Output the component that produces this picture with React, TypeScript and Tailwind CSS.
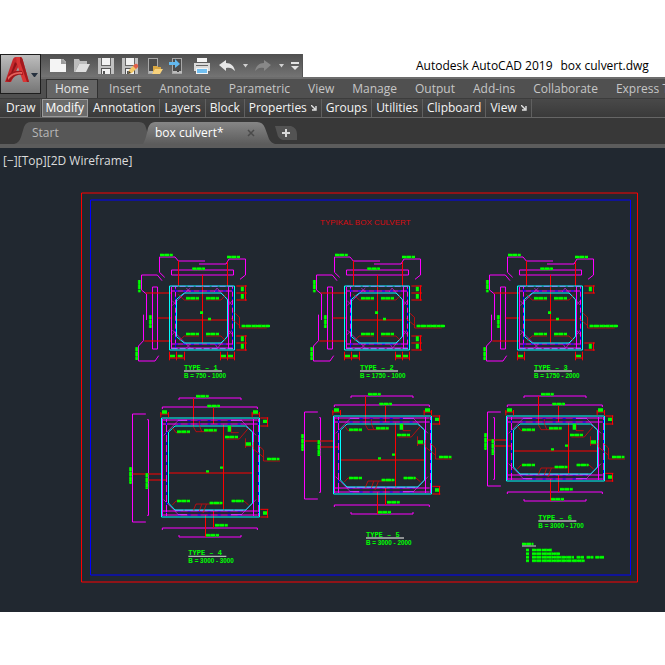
import { useState } from "react";

const ribbonTabs = ["Home", "Insert", "Annotate", "Parametric", "View", "Manage", "Output", "Add-ins", "Collaborate", "Express Tools"];

const panels = [
    { name: "Draw" },
    { name: "Modify" },
    { name: "Annotation" },
    { name: "Layers" },
    { name: "Block" },
    { name: "Properties", launcher: true },
    { name: "Groups" },
    { name: "Utilities" },
    { name: "Clipboard" },
    { name: "View", launcher: true },
];

const MAGENTA = "#ff00ff";
const RED = "#ff0000";
const CYAN = "#00ffff";
const GREEN = "#00ff00";
const BLUE = "#0000ff";

/* ---------- Quick access toolbar ---------- */

function NewIcon() {
    return (
        <svg width="18" height="18" viewBox="0 0 18 18">
            <path d="M1 2h11l5 5v8H1z" fill="#f4f4f4" />
            <path d="M12 2v5h5z" fill="#9a9a9a" />
            <path d="M13 2h1l3 3v1z" fill="#f4f4f4" />
        </svg>
    );
}

function OpenIcon() {
    return (
        <svg width="18" height="18" viewBox="0 0 18 18">
            <path d="M1 15V2h5l1 2h7v3H6L2 15z" fill="#bcbcbc" />
            <path d="M6 7h11l-4 8H2z" fill="#dedede" />
        </svg>
    );
}

function SaveIcon({ pencil }: { pencil?: boolean }) {
    return (
        <svg width="18" height="18" viewBox="0 0 18 18">
            <path d="M1 1h16v16H1z" fill="#c2c2c2" />
            <path d="M4 1h10v8H4z" fill="#666" />
            <path d="M5 1h8v7H5z" fill="#f2f2f2" />
            <path d="M4 11h10v6H4z" fill="#555" />
            <path d="M5 12h8v5H5z" fill="#f2f2f2" />
            <path d="M6 14h2v3H6z" fill="#555" />
            {pencil && (
                <>
                    <path d="M7 17l1-4 6-6 3 3-6 6z" fill="#f3c766" />
                    <path d="M12 9l2-2q2-1 3 1t-1 3l-1 1z" fill="#e0604c" />
                    <path d="M7 17l1-3 2 2z" fill="#3b3b3b" />
                </>
            )}
        </svg>
    );
}

function DeviceIcon({ kind }: { kind: "open" | "save" }) {
    return (
        <svg width="18" height="18" viewBox="0 0 18 18">
            <rect x="3.5" y="1.5" width="9" height="15" fill="#4c4c4c" stroke="#a8a8a8" />
            <path d="M4 14h9v2H4z" fill="#bcbcbc" />
            <path d="M8 14h2v1H8z" fill="#444" />
            {kind === "open" ? (
                <>
                    <path d="M8 16V9h4l1 1h3v2z" fill="#d9a640" />
                    <path d="M10 12h8l-3 5H7z" fill="#f8d27c" />
                </>
            ) : (
                <path d="M0 5h6V2l5 5-5 4V8H0z" fill="#63b8ee" />
            )}
        </svg>
    );
}

function PrintIcon() {
    return (
        <svg width="18" height="18" viewBox="0 0 18 18">
            <path d="M4 1h10v4H4z" fill="#f3f3f3" />
            <path d="M1 6h16v8H1z" fill="#dadada" />
            <path d="M3 8h12v1H3z" fill="#666" />
            <path d="M3 11h12v6H3z" fill="#f3f3f3" />
            <path d="M4 12h10v4H4z" fill="#71bff0" />
        </svg>
    );
}

function ArrowIcon({ redo }: { redo?: boolean }) {
    return (
        <svg width="16" height="16" viewBox="0 0 16 16">
            {redo ? (
                <path d="M16 7l-7-5v3C4 5 1 8 0 13c3-3 5-4 9-3v3z" fill="#888" />
            ) : (
                <path d="M0 7l7-5v3c5 0 8 3 9 8-3-3-5-4-9-3v3z" fill="#e6e6e6" />
            )}
        </svg>
    );
}

function Caret({ bar }: { bar?: boolean }) {
    return (
        <svg width="8" height="16" viewBox="0 0 8 16">
            {bar ? (
                <path d="M0 4h8v2H0zM0 8h8l-4 4z" fill="#e4e4e4" />
            ) : (
                <path d="M2 6h5L4.500 9.500z" fill="#d0d0d0" />
            )}
        </svg>
    );
}

function QuickAccess() {
    return (
        <div className="flex h-[23px] w-[303px] items-center border-r border-[#555] bg-gradient-to-b from-[#4f4f4f] to-[#747474] pl-[49px]">
            <div className="flex items-center gap-1.5">
                <button aria-label="New"><NewIcon /></button>
                <button aria-label="Open"><OpenIcon /></button>
                <button aria-label="Save"><SaveIcon /></button>
                <button aria-label="Save as"><SaveIcon pencil /></button>
                <button aria-label="Open from mobile"><DeviceIcon kind="open" /></button>
                <button aria-label="Save to mobile"><DeviceIcon kind="save" /></button>
                <button aria-label="Plot"><PrintIcon /></button>
            </div>
            <div className="ml-2 flex items-center gap-1.5">
                <button aria-label="Undo"><ArrowIcon /></button>
                <button aria-label="Undo list"><Caret /></button>
                <button aria-label="Redo"><ArrowIcon redo /></button>
                <button aria-label="Redo list"><Caret /></button>
                <button aria-label="Customize"><Caret bar /></button>
            </div>
        </div>
    );
}

function AppButton() {
    return (
        <button aria-label="Application menu" className="absolute left-0 top-0 z-10 h-10 w-[41px] border border-[#1d1d1d] bg-gradient-to-b from-[#bdbdbd] to-[#767676]">
            <svg className="block" width="39" height="38" viewBox="0 0 39 38">
                <path d="M4 27L12 4Q13 2 15 2H19L20 6 11 25 10 27z" fill="#c5272b" />
                <path d="M15 2H19Q21 2 21.500 4L28 27H22L16 9z" fill="#d93535" />
                <path d="M19 2Q21 2 21.500 4L28 27H26L19 7z" fill="#a3191d" />
                <path d="M5 26L8 19C12 16 16 15 21 16L22 20C16 19 13 21 9 27z" fill="#9c181c" />
                <path d="M7 22C11 18 15 17 21 17V19C15 18 11 20 7 25z" fill="#e6605a" />
                <path d="M14 7l2 2-4 8-2 1z" fill="#8d1418" />
                <path d="M30 18h7l-3 4h-1z" fill="#26313f" />
            </svg>
        </button>
    );
}

/* ---------- Ribbon ---------- */

function Ribbon() {
    const [tab, setTab] = useState("Home");
    return (
        <nav>
            <div className="flex h-[21px] overflow-hidden border-t-2 border-[#6c6c6c] bg-[#505050] pl-[46px]">
                {ribbonTabs.map((name) => (
                    <button
                        key={name}
                        onClick={() => setTab(name)}
                        className={
                            name === tab
                                ? "mr-[2px] shrink-0 border border-b-0 border-[#303030] bg-[#656565] px-2 text-[12px] leading-[18px] text-[#e6e6e6]"
                                : "shrink-0 px-[9px] text-[12px] leading-[20px] text-[#c6c6c6]"
                        }
                    >
                        {name}
                    </button>
                ))}
            </div>
            <div className="flex h-5 border-y border-t-[#3c3c3c] border-b-[#666] bg-gradient-to-b from-[#494949] to-[#3a3a3a] pl-[2px]">
                {panels.map((p) => (
                    <button
                        key={p.name + (p.launcher ? "-l" : "")}
                        className={
                            p.name === "Modify"
                                ? "mx-[1px] flex shrink-0 items-center border border-[#9a9a9a] bg-[#6b6b6b] px-[3px] text-[12px] leading-[16px] text-white"
                                : "flex shrink-0 items-center gap-1 border-r border-[#606060] px-1 text-[12px] leading-[18px] text-[#f4f4f4]"
                        }
                    >
                        {p.name}
                        {p.launcher && (
                            <svg width="6" height="6" viewBox="0 0 6 6">
                                <path d="M0 0l4 4M5 1v4H1" stroke="#e0e0e0" strokeWidth="1.4" fill="none" />
                            </svg>
                        )}
                    </button>
                ))}
            </div>
        </nav>
    );
}

function FileTabs() {
    return (
        <div className="flex h-[30px] border-b-4 border-[#5c5c5c] bg-[#383838] pl-[14px] pt-[4px] text-[12px] leading-[22px]">
            <button className="relative -mr-2 h-[22px] w-[137px] pl-[18px] text-left text-[#b8b8b8]">
                <svg className="absolute inset-0" width="137" height="22" viewBox="0 0 137 22">
                    <path d="M0 22Q5 21 7 15L10 5Q12 0 17 0H125Q131 0 132 6L137 22z" fill="#575757" />
                </svg>
                <span className="relative">Start</span>
            </button>
            <button className="relative h-[22px] w-[132px] pl-[12px] text-left text-white">
                <svg className="absolute inset-0" width="132" height="22" viewBox="0 0 132 22">
                    <defs>
                        <linearGradient id="tab" x1="0" y1="0" x2="0" y2="1">
                            <stop offset="0" stopColor="#868686" />
                            <stop offset="1" stopColor="#5c5c5c" />
                        </linearGradient>
                    </defs>
                    <path d="M0 22Q3 17 5 6Q7 0 12 0H114Q120 0 122 6L126 17Q128 21 132 22z" fill="url(#tab)" />
                    <path d="M105 8l6 6M111 8l-6 6" stroke="#4a4a4a" strokeWidth="1.500" />
                </svg>
                <span className="relative">box culvert*</span>
            </button>
            <button aria-label="New drawing" className="h-[22px]">
                <svg width="22" height="22" viewBox="0 0 22 22">
                    <path d="M0 4H16Q22 6 22 12V18H8Q3 17 2 11z" fill="#535353" />
                    <path d="M11 7v8M7 11h8" stroke="#d8d8d8" strokeWidth="2" />
                </svg>
            </button>
        </div>
    );
}

/* ---------- Drawing, three drawing units to a pixel ---------- */

type StrokeProps = { d: string; c: string; w?: number; dash?: string };

function Stroke({ d, c, w = 3, dash }: StrokeProps) {
    return <path d={d} stroke={c} strokeWidth={w} strokeDasharray={dash} fill="none" />;
}

// Bar marks plotted too small to read
function Marks({ d }: { d: string }) {
    return (
        <>
            <Stroke d={d} c="#00b400" w={9} dash="11 2 14 2 6 1" />
            <Stroke d={d} c={GREEN} w={6} dash="12 1 15 2" />
        </>
    );
}

type TitleProps = { x: number; y: number; n: number; size: string };

function Title({ x, y, n, size }: TitleProps) {
    return (
        <g fill={GREEN}>
            <text x={x} y={y} fontSize="21" fontWeight="bold" fontFamily="'Liberation Mono', monospace" xmlSpace="preserve">{`TYPE – ${n}`}</text>
            <text x={x} y={y + 23} fontSize="19" fontWeight="bold" fontFamily="'Liberation Sans', sans-serif">{size}</text>
            <path d={`M${x} ${y + 3}h114`} stroke="#d8d8d8" strokeWidth="4" opacity="0.8" />
        </g>
    );
}

type SmallProps = { x: number; n: number; size: string; titleX: number; single?: boolean };

function SmallCulvert({ x, n, size, titleX, single }: SmallProps) {
    return (
        <g transform={`translate(${x} 240) scale(${1 / 3})`}>
            {/* bent bars and bar shapes outside the section */}
            <Stroke c={MAGENTA} d="M119 112L103.500 97V51H150L160 63H240M345 118L361.500 105V57H312L303 72H222M139.500 90H325.500V105H139.500zM111 122L97 105H49.500V150L64.500 162V240M101 347L90 363H40.500V318L55.500 302V224M82.500 141H97.500V327H82.500z" />
            <Stroke c={RED} d="M160.500 62V138M307.500 65V138M232.500 104V309M154 240H308M62 159H138M98 234H138M58 303H138" />

            {/* haunches */}
            <Stroke c="#a020b0" d="M142 196L196 144M184 144L196 156M268 156L276 144L322 196M142 270L196 324M184 324L196 312M270 312L278 324L322 270M142 182L154 196M142 284L154 270M322 182L310 196M322 284L310 270" />

            {/* concrete outline and reinforcement */}
            <Stroke c={CYAN} d="M133.500 138H328.500V330H133.500z" />
            <Stroke c={MAGENTA} d="M139.500 141V327M151.500 141V327M310.500 141V327M322.500 141V327M138 153H324M138 312H324M138 324H324" />
            <Stroke c="#8090ff" d="M140 139H324M140 326H324" dash="18 6" />
            <Stroke c={BLUE} d="M151.500 146V324M322.500 146V324M150 153H318M150 312H318" dash="9 15" />
            <Stroke c={CYAN} d="M154.500 178L178 159H288L307.500 178V290L288 309H178L154.500 290z" />

            {/* leaders */}
            <Stroke c={RED} w={2} d="M160 163L178 180H222M303 163L288 180H243M162 302L178 288H222M301 302L288 288H243M328 218L343.500 232V264H425M318 235L343 256" />
            <Stroke c={RED} d="M133.500 335V361M154.500 335V361M307.500 335V361M328.500 335V361M133 354H155M307 354H329" />
            <Stroke c={RED} d="M334 138H366M334 159H366M334 309H366M334 330H366M361.500 136V160M361.500 307V332" />
            {!single && <Stroke c={RED} d="M178.500 335V361M286.500 335V361M154 354H179M286 354H308M334 180H366M334 288H366M361.500 158V182M361.500 286V308" />}

            {/* bar marks */}
            <Marks d="M105 45H143M306 51H345M202 86H240M183 175H222M243 175H282M183 282H222M243 282H282M350 258H435M43 120V157M76 226V264M35 322V360" />
            <Stroke c={GREEN} w={8} d="M225 218H234M249 237H258M135 348H150M309 348H324" />
            <Stroke c={GREEN} w={9} d="M352 140V154M352 311V326" />
            {!single && (
                <>
                    <Stroke c={GREEN} w={8} d="M158 348H173M288 348H303" />
                    <Stroke c={GREEN} w={9} d="M352 162V176M352 289V304" />
                </>
            )}
            <Title x={titleX} y={390} n={n} size={size} />
        </g>
    );
}

type LargeProps = {
    x: number;
    y: number;
    h: number;
    n: number;
    size: string;
    mid: number;
    titleY: number;
    titleX: number;
    // hoop bars at the left: position, bottom and level of the leaders
    bars: { x1: number; x2: number; bottom: number; lead: number };
};

function LargeCulvert({ x, y, h, n, size, mid, titleY, titleX, bars }: LargeProps) {
    const { x1, x2, bottom, lead } = bars;
    const wallEnd = h - 42;
    return (
        <g transform={`translate(${x} ${y}) scale(${1 / 3})`}>
            {/* bars above and below */}
            <Stroke c={MAGENTA} d={`M54 -54V-60H240V-54M4 -27V-33H289V-27M4 ${h + 39}V${h + 33}H289V${h + 39}M54 ${h + 54}V${h + 60}H240V${h + 54}`} />
            <Stroke c={MAGENTA} d={`M${x1 + 40} -12H${x1}V${bottom}H${x1 + 40}M${x2 - 4} 5H${x2}V${bottom - 20}H${x2 - 4}`} />
            <Stroke c={RED} d={`M${x1} ${lead}H2M${x2} ${lead + 18}H17M97.500 -60V26M157.500 -31V18M133.500 ${h - 6}V${h + 60}M157.500 ${h - 18}V${h + 33}M187.500 20V${h - 22}M22 ${mid}H275`} />

            {/* haunches */}
            <Stroke c="#a020b0" d={`M8 52L50 9M285 52L243 9M8 ${h - 52}L50 ${h - 9}M285 ${h - 52}L243 ${h - 9}`} />

            <Stroke c={CYAN} d={`M1.500 0H295.500V${h}H1.500z`} />
            <Stroke c={MAGENTA} d={`M4.500 3V${h - 3}M16.500 3V${h - 3}M277.500 3V${h - 3}M292.500 3V${h - 3}M6 6H290M6 18H290M6 ${h - 18}H290M6 ${h - 6}H290`} />
            <Stroke c={BLUE} d={`M16.500 12V${h - 12}M292.500 12V${h - 12}M50 8H245M50 18H245M50 ${h - 18}H245M50 ${h - 6}H245`} dash="9 21" />
            <Stroke c="#d040ff" d={`M50 7H78M210 7H243M50 ${h - 7}H78M210 ${h - 7}H243`} />
            <Stroke c={CYAN} d={`M22.500 ${wallEnd}V42L42 24H254L274.500 42V${wallEnd}L254 ${h - 21}H42z`} />
            <Stroke c="#8090ff" d={`M42 ${h - 20}H254`} dash="24 6" />

            {/* leaders */}
            <Stroke c={RED} w={2} d="M34 29L45 44H87M97 26L105 41H166M115 8V22L122 40M262 31L235 63H196M210.500 23V44H233M253.500 61V90M253 84H275M277 72V93L307 117M293 83L307.500 96V129H357" />
            <Stroke c={RED} w={2} d={`M34 ${h - 36}L45 ${h - 48}H87M263 ${h - 36}L249 ${h - 48}H212M97 ${h - 20}L105 ${h - 39}H182M115 ${h - 18}L122 ${h - 38}M126 ${h - 12}L136 ${h - 38}`} />
            <Stroke c={RED} d={`M-2 -12H22M-.500 -18V-2M22.500 -18V-2M272 -12H296M273.500 -18V-2M295.500 -18V-2M298 0H322M298 24H322M319.500 -2V26M298 ${h - 23}H322M298 ${h}H322M319.500 ${h - 24}V${h + 2}`} />

            {/* bar marks */}
            <Marks d={`M105 -65H143M139 -36H177M48 41H87M129 37H167M192 57H231M318 123H355M48 ${h - 48}H87M212 ${h - 48}H248M146 ${h - 42}H184M162 ${h + 25}H200M135 ${h + 55}H174M${x1 - 6} ${lead - 20}V${lead + 30}M${x2 - 5} ${lead - 2}V${lead + 45}`} />
            <Stroke c={GREEN} w={10} d={`M3 -18H18M276 -18H291M205 23V41M254 78H270M306 10H318M306 ${h - 12}H318`} />
            <Stroke c={GREEN} w={7} d={`M135 ${mid - 5}H144M177 ${mid - 16}H186`} />
            <Title x={titleX} y={titleY} n={n} size={size} />
        </g>
    );
}

function Drawing() {
    return (
        <svg className="block w-full" viewBox="0 172 665 440" role="img" aria-label="Box culvert drawing">
            <path d="M81.500 193H637.500V582H81.500z" fill="none" stroke={RED} />
            <path d="M90.500 200H630.500V575H90.500z" fill="none" stroke={BLUE} />
            <text x="320" y="225" fontSize="8" fill="#d80c10" fontFamily="'Liberation Sans', sans-serif">TYPIKAL BOX CULVERT</text>

            <SmallCulvert x={125} n={1} size="B = 750 - 1000" titleX={177} />
            <SmallCulvert x={300} n={2} size="B = 1750 - 1000" titleX={180} />
            <SmallCulvert x={473} n={3} size="B = 1750 - 2000" titleX={183} single />

            <LargeCulvert x={161} y={418} h={297} n={4} size="B = 3000 - 3000" mid={165} titleX={82} titleY={412} bars={{ x1: -85.5, x2: -37.5, bottom: 312, lead: 168 }} />
            <LargeCulvert x={333} y={416} h={234} n={5} size="B = 3000 - 2000" mid={132} titleX={99} titleY={363} bars={{ x1: -85.5, x2: -37.5, bottom: 249, lead: 75 }} />
            <LargeCulvert x={506} y={416} h={195} n={6} size="B = 3000 - 1700" mid={105} titleX={97} titleY={312} bars={{ x1: -55.5, x2: -34.5, bottom: 210, lead: 72 }} />

            {/* general notes */}
            <g transform={`translate(470 385) scale(${1 / 3})`}>
                <Marks d="M156 477H190M186 495H246M186 506H270M186 517H312M320 517H342M350 517H370M376 517H402M186 527H344M168 495H177M168 506H177M168 517H177M168 527H177" />
                <path d="M156 483H198" stroke="#c8c8c8" strokeWidth="4" opacity="0.8" />
            </g>
        </svg>
    );
}

export default function App() {
    return (
        <div className="min-h-screen bg-white py-[54px] font-['Open_Sans',sans-serif]">
            <header className="relative">
                <AppButton />
                <div className="flex">
                    <QuickAccess />
                    <div className="flex flex-1 gap-2 whitespace-nowrap pl-[113px] text-[12px] leading-[23px] text-black">
                        <span>Autodesk AutoCAD 2019</span>
                        <span>box culvert.dwg</span>
                    </div>
                </div>
                <Ribbon />
                <FileTabs />
            </header>
            <main className="bg-[#212830]">
                <p className="h-6 pl-[3px] pt-[2px] text-[12px] leading-[22px] text-[#dcdcdc]">[−][Top][2D Wireframe]</p>
                <Drawing />
            </main>
        </div>
    );
}
